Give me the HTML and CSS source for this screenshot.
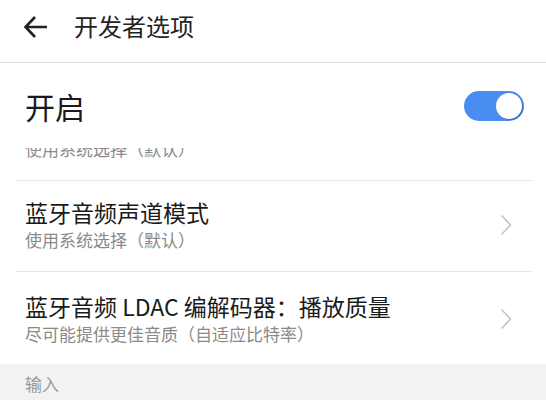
FILE: index.html
```html
<!DOCTYPE html>
<html lang="zh-CN">
<head>
  <meta charset="UTF-8" />
  <meta name="viewport" content="width=device-width, initial-scale=1.0"/>
  <title>开发者选项</title>
  <link rel="stylesheet" href="styles.css">
</head>
<body>
  <div class="topbar">
    <svg class="back" width="26" height="24" viewBox="0 0 26 24">
      <path d="M24 12H3M12 2L2.5 12L12 22" fill="none" stroke="#222" stroke-width="2.6"/>
    </svg>
    <div class="title">开发者选项</div>
  </div>

  <div class="master">
    <span>开启</span>
    <div class="switch on"><div class="knob"></div></div>
  </div>

  <div class="list">
    <div class="list-inner">
      <div class="item first">
        <div class="text">
          <div class="desc">使用系统选择（默认）</div>
        </div>
      </div>
      <div class="item">
        <div class="text">
          <div class="name">蓝牙音频声道模式</div>
          <div class="desc">使用系统选择（默认）</div>
        </div>
        <svg class="chev" width="12" height="22" viewBox="0 0 12 22"><path d="M1.5 1.5L10.5 11L1.5 20.5" fill="none" stroke="#c4c4c4" stroke-width="1.6"/></svg>
      </div>
      <div class="item last">
        <div class="text">
          <div class="name">蓝牙音频 LDAC 编解码器：播放质量</div>
          <div class="desc">尽可能提供更佳音质（自适应比特率）</div>
        </div>
        <svg class="chev" width="12" height="22" viewBox="0 0 12 22"><path d="M1.5 1.5L10.5 11L1.5 20.5" fill="none" stroke="#c4c4c4" stroke-width="1.6"/></svg>
      </div>
    </div>
  </div>

  <div class="section">输入</div>
</body>
</html>
```

FILE: styles.css
```css
body {
  margin: 0;
  padding: 0;
  width: 546px;
  height: 400px;
  overflow: hidden;
  background: #fff;
  font-family: "Noto Sans CJK SC", "Noto Sans", sans-serif;
  color: #1a1a1a;
}
.topbar {
  height: 62px;
  display: flex;
  align-items: center;
  padding-bottom: 10px;
  box-sizing: border-box;
  border-bottom: 1px solid #dadada;
  height: 63px;
}
.back {
  margin-left: 23px;
  margin-top: 1px;
}
.title {
  margin-left: 25px;
  font-size: 24px;
  line-height: 30px;
  color: #222;
}
.master {
  height: 85px;
  display: flex;
  align-items: center;
  justify-content: space-between;
  padding: 0 22px 0 25px;
  box-sizing: border-box;
  font-size: 30px;
}
.switch {
  width: 60px;
  height: 30px;
  border-radius: 15px;
  background: #4a8df0;
  position: relative;
}
.knob {
  position: absolute;
  top: 2px;
  right: 2px;
  width: 26px;
  height: 26px;
  border-radius: 50%;
  background: #fff;
  box-shadow: 1px 1px 1px rgba(30,60,120,0.45);
}
.list {
  height: 216px;
  overflow: hidden;
}
.list-inner {
  margin-top: -12px;
}
.item {
  margin: 0 14px 0 16px;
  padding: 16px 20px 18px 9px;
  display: flex;
  align-items: center;
  justify-content: space-between;
  border-bottom: 1px solid #e6e6e6;
}
.item.first {
  padding-top: 0;
}
.item.last {
  border-bottom: none;
  padding-top: 19px;
}
.name {
  font-size: 23px;
  line-height: 30px;
  color: #1a1a1a;
}
.desc {
  font-size: 17px;
  line-height: 26px;
  color: #8a8a8a;
}
.section {
  background: #f2f2f2;
  height: 36px;
  padding: 8px 0 0 25px;
  font-size: 17px;
  line-height: 24px;
  color: #999;
}
```
